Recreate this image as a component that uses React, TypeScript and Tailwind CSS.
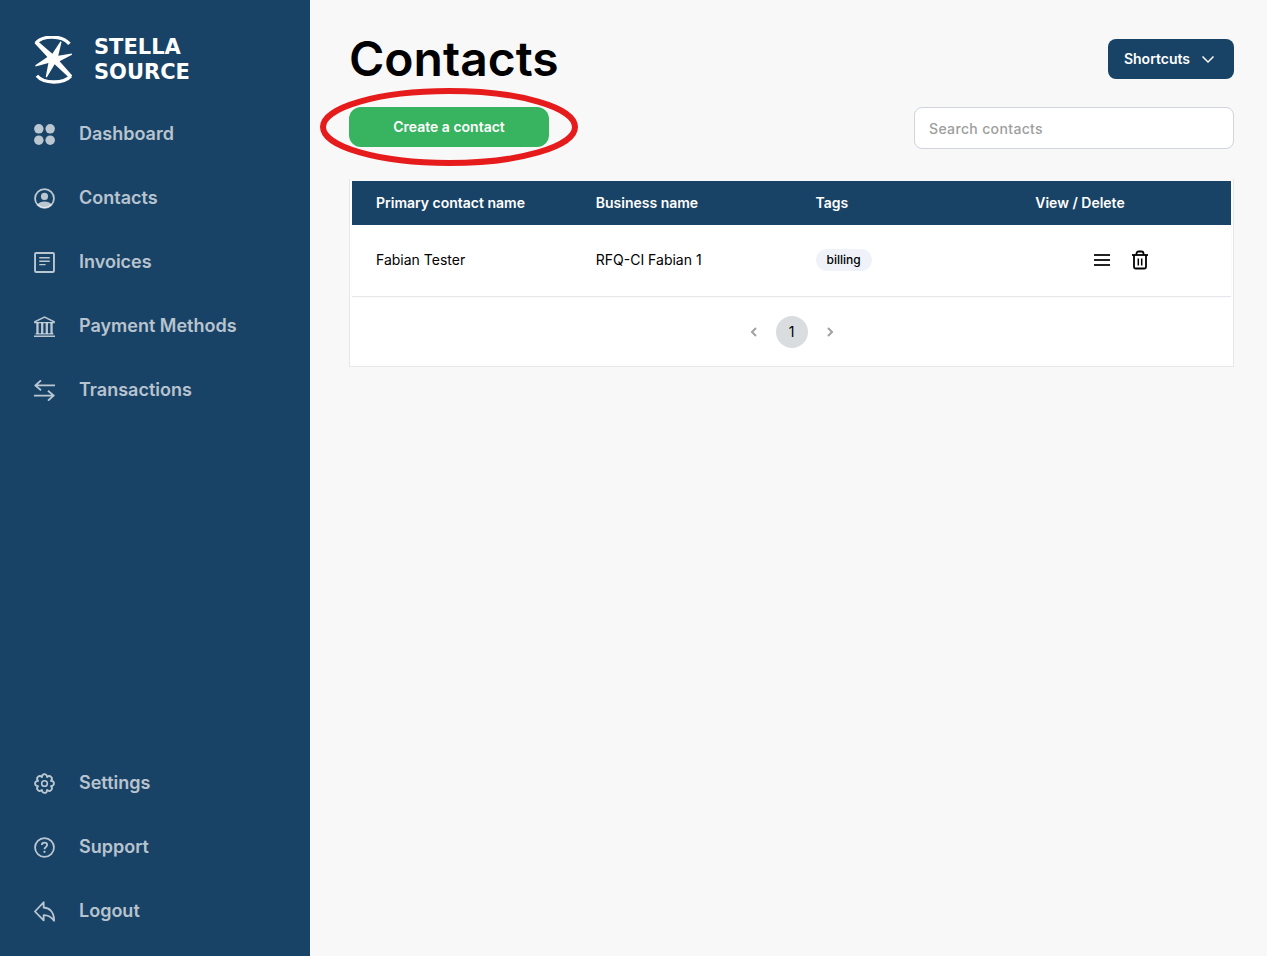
import type { ReactNode } from "react";

interface NavItem {
  label: string;
  icon: ReactNode;
}

/** 21px sidebar glyph; children draw with currentColor. */
function Icon({ children }: { children: ReactNode }) {
  return (
    <svg
      viewBox="0 0 20 20"
      className="size-[21px] shrink-0"
      fill="none"
      stroke="currentColor"
      strokeWidth="1.7"
      aria-hidden="true"
    >
      {children}
    </svg>
  );
}

const mainNav: NavItem[] = [
  {
    label: "Dashboard",
    icon: (
      <Icon>
        <g fill="currentColor" stroke="none">
          <circle cx="4.6" cy="4.6" r="4.5" />
          <circle cx="15.4" cy="4.6" r="4.5" />
          <circle cx="4.6" cy="15.4" r="4.5" />
          <circle cx="15.4" cy="15.4" r="4.5" />
        </g>
      </Icon>
    ),
  },
  {
    label: "Contacts",
    icon: (
      <Icon>
        <circle cx="10" cy="10" r="9" />
        <circle cx="10" cy="8" r="3.4" fill="currentColor" stroke="none" />
        <path
          d="M3 15.8C4.6 13.8 7.2 12.9 10 12.9s5.4.9 7 2.9A9 9 0 0 1 10 19a9 9 0 0 1-7-3.2z"
          fill="currentColor"
          stroke="none"
        />
      </Icon>
    ),
  },
  {
    label: "Invoices",
    icon: (
      <Icon>
        <rect x="1" y="1" width="18" height="18" rx="1" strokeWidth="1.8" />
        <path d="M5 5.5h10M5 8.8h10M5 12h6" strokeWidth="1.3" />
      </Icon>
    ),
  },
  {
    label: "Payment Methods",
    icon: (
      <Icon>
        <path d="M.8 6.3V5.5L10 1l9.2 4.5v.8z" strokeWidth="1.4" />
        <path d="M0 19.3h20M1.5 17h17" strokeWidth="1.3" />
        <path d="M3.3 6.5V17M7.8 6.5V17M12.2 6.5V17M16.7 6.5V17" strokeWidth="2.2" />
      </Icon>
    ),
  },
  {
    label: "Transactions",
    icon: (
      <Icon>
        <path d="M20 5.2H1.2M6.7.3 1.2 5.2l5.5 4.6" />
        <path d="M0 14.8h18.8M13.3 10.2l5.5 4.6-5.5 4.9" />
      </Icon>
    ),
  },
];

const footerNav: NavItem[] = [
  {
    label: "Settings",
    icon: (
      <Icon>
        <path
          d="M7.6 3.9C7.6 0 12.4 0 12.4 3.9C15.1 1.2 18.8 4.9 16.1 7.6C20 7.6 20 12.4 16.1 12.4C18.8 15.1 15.1 18.8 12.4 16.1C12.4 20 7.6 20 7.6 16.1C4.9 18.8 1.2 15.1 3.9 12.4C0 12.4 0 7.6 3.9 7.6C1.2 4.9 4.9 1.2 7.6 3.9z"
          strokeLinejoin="round"
        />
        <circle cx="10" cy="10" r="2.7" strokeWidth="1.5" />
      </Icon>
    ),
  },
  {
    label: "Support",
    icon: (
      <Icon>
        <circle cx="10" cy="10" r="9" />
        <path d="M7.5 7.7C7.5 6.3 8.6 5.4 10 5.4s2.5.9 2.5 2.2c0 1.9-2.5 1.9-2.5 4.1" />
        <circle cx="10" cy="14.1" r="1.1" fill="currentColor" stroke="none" />
      </Icon>
    ),
  },
  {
    label: "Logout",
    icon: (
      <Icon>
        <path
          d="M9.2 1.2.9 10l8.3 8.5v-5c4-.1 7 1.4 9.9 5.4C19.3 11.5 15.7 6.7 9.2 6.2z"
          strokeLinejoin="round"
        />
      </Icon>
    ),
  },
];

const contacts = [{ name: "Fabian Tester", business: "RFQ-CI Fabian 1", tag: "billing" }];

function Logo() {
  return (
    <a href="#" className="mb-[18px] flex h-12 items-center gap-[22px] pl-[34px] text-white">
      <svg viewBox="0 0 114 146" className="h-12 w-[38px] shrink-0" aria-hidden="true">
        <path
          d="M5 22C24-2 84-4 107 24M8 121c22 26 82 24 103 1"
          fill="none"
          stroke="currentColor"
          strokeWidth="10"
        />
        <path
          d="M1 22 10 15 55 54 80 16 83 18 73 60l41-7 1 4-38 20 39 44-9 7-45-42-24 40-3-2 8-42-39 11-1-4 37-25z"
          fill="currentColor"
        />
      </svg>
      <span className="flex flex-col font-['DejaVu_Sans',sans-serif] text-[21px] leading-[25px] font-bold">
        <span>STELLA</span>
        <span>SOURCE</span>
      </span>
    </a>
  );
}

function NavList({ items }: { items: NavItem[] }) {
  return (
    <ul>
      {items.map((item) => (
        <li key={item.label}>
          <a
            href="#"
            className="flex h-16 items-center gap-6 pl-[34px] text-lg font-semibold text-white/70"
          >
            {item.icon}
            {item.label}
          </a>
        </li>
      ))}
    </ul>
  );
}

function Sidebar() {
  return (
    <aside className="flex w-[310px] shrink-0 flex-col bg-[#194366] pt-9 pb-[13px]">
      <Logo />
      <nav className="flex flex-1 flex-col justify-between">
        <NavList items={mainNav} />
        <NavList items={footerNav} />
      </nav>
    </aside>
  );
}

function Chevron({ d, className }: { d: string; className: string }) {
  return (
    <svg viewBox="0 0 12 12" className={className} fill="none" stroke="currentColor" aria-hidden="true">
      <path d={d} />
    </svg>
  );
}

function ContactsTable() {
  return (
    <section className="mt-[30px] border border-t-0 border-gray-200 bg-white">
      <div className="border-t-2 border-[#f8f8f8] px-[2px]">
        <table className="w-full table-fixed text-left text-sm">
          <thead className="h-11 bg-[#194366] text-white">
            <tr>
              <th className="pl-6 font-semibold">Primary contact name</th>
              <th className="pl-6 font-semibold">Business name</th>
              <th className="pl-6 font-semibold">Tags</th>
              <th className="pl-6 font-semibold">View / Delete</th>
            </tr>
          </thead>
          <tbody>
            {contacts.map((contact) => (
              <tr key={contact.name} className="h-[71px] border-b border-gray-200 text-black shadow-xs">
                <td className="pl-6">{contact.name}</td>
                <td className="pl-6">{contact.business}</td>
                <td className="pl-6">
                  <span className="inline-block rounded-full bg-[#eff3f9] px-[11px] text-xs leading-[22px] font-medium">
                    {contact.tag}
                  </span>
                </td>
                <td>
                  <div className="flex items-center justify-center gap-5">
                    <button type="button" aria-label={`View ${contact.name}`}>
                      <svg viewBox="0 0 18 20" className="h-5 w-[18px]" stroke="#222" strokeWidth="2">
                        <path d="M1 5h16M1 10h16M1 15h16" />
                      </svg>
                    </button>
                    <button type="button" aria-label={`Delete ${contact.name}`}>
                      <svg
                        viewBox="0 0 18 20"
                        className="h-5 w-[18px]"
                        fill="none"
                        stroke="#000"
                        strokeWidth="1.8"
                      >
                        <path d="M1 5h16" />
                        <path d="M5.5 5V3.5a2 2 0 0 1 2-2h3a2 2 0 0 1 2 2V5" />
                        <path d="M3 5v12a1.5 1.5 0 0 0 1.5 1.5h9A1.5 1.5 0 0 0 15 17V5" />
                        <path d="M7.3 8.5v7M10.7 8.5v7" strokeWidth="1.5" />
                      </svg>
                    </button>
                  </div>
                </td>
              </tr>
            ))}
          </tbody>
        </table>
      </div>
      <nav
        aria-label="Pagination"
        className="flex items-center justify-center gap-4 pt-[19px] pb-[18px] text-neutral-400"
      >
        <button type="button" aria-label="Previous page">
          <Chevron d="M8 2 4 6l4 4" className="size-3 stroke-2" />
        </button>
        <button type="button" className="size-8 rounded-full bg-[#d9dde0] text-sm text-black">
          1
        </button>
        <button type="button" aria-label="Next page">
          <Chevron d="m4 2 4 4-4 4" className="size-3 stroke-2" />
        </button>
      </nav>
    </section>
  );
}

export default function App() {
  return (
    <div className="flex min-h-screen bg-[#f8f8f8] font-['Inter',sans-serif]">
      <Sidebar />
      <main className="min-w-0 flex-1 pt-[39px] pr-[33px] pl-[39px]">
        <header className="flex h-10 items-center justify-between">
          <h1 className="text-5xl leading-10 font-semibold text-black">Contacts</h1>
          <button
            type="button"
            className="flex h-10 items-center gap-3 rounded-lg bg-[#194366] pr-5 pl-4 text-sm font-semibold text-white"
          >
            Shortcuts
            <Chevron d="m.5 3.5 5.500 5.500 5.500-5.500" className="size-3 stroke-[1.5]" />
          </button>
        </header>
        <div className="mt-7 flex items-start justify-between gap-8">
          <div className="relative">
            <button
              type="button"
              className="h-10 w-[200px] rounded-xl bg-[#38b360] text-sm font-semibold text-white"
            >
              Create a contact
            </button>
            <svg
              viewBox="0 0 260 80"
              className="pointer-events-none absolute -top-5 -left-[30px] h-20 w-[260px] max-w-none"
              aria-hidden="true"
            >
              <ellipse cx="130" cy="40" rx="126" ry="36" fill="none" stroke="#e61c1c" strokeWidth="6" />
            </svg>
          </div>
          <input
            type="search"
            aria-label="Search contacts"
            placeholder="Search contacts"
            className="h-[42px] w-[320px] rounded-lg border border-[#cfd4de] bg-white px-[14px] text-sm font-medium tracking-wide placeholder:text-[#9e9e9e]"
          />
        </div>
        <ContactsTable />
      </main>
    </div>
  );
}
